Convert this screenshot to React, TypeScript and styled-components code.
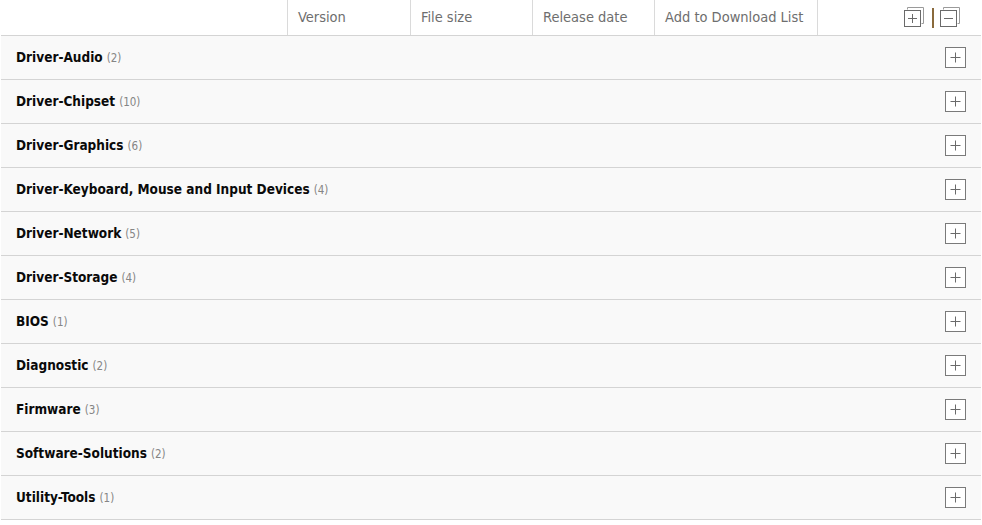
import React from "react";
import styled, { createGlobalStyle } from "styled-components";

const Global = createGlobalStyle`
  html, body { margin: 0; padding: 0; background: #ffffff; }
  body { font-family: "DejaVu Sans Condensed", "DejaVu Sans", "Liberation Sans", sans-serif; }
`;

const Table = styled.div`
  width: 980px;
  margin-left: 1px;
`;

const HeaderRow = styled.div`
  display: grid;
  grid-template-columns: 286px 123px 122px 122px 163px 1fr;
  height: 35px;
  border-bottom: 1px solid #d4d4d4;
  background: #ffffff;
`;

const HeadCell = styled.div<{ $divider?: boolean }>`
  display: flex;
  align-items: center;
  padding-left: 10px;
  padding-bottom: 2px;
  font-size: 14.5px;
  color: #6e6e6e;
  border-left: ${(p) => (p.$divider ? "1px solid #dadada" : "none")};
  white-space: nowrap;
`;

const ToolCell = styled.div`
  display: flex;
  align-items: center;
  justify-content: flex-end;
  padding-right: 21px;
  border-left: 1px solid #dadada;
`;

const Bar = styled.span`
  display: block;
  width: 2px;
  height: 20px;
  background: #8a6a3c;
  margin: 0 6px 0 8px;
`;

const Row = styled.div`
  display: flex;
  align-items: center;
  height: 43px;
  border-bottom: 1px solid #d4d4d4;
  background: #f9f9f9;
  padding-left: 15px;
  padding-right: 15px;
`;

const Label = styled.div`
  display: flex;
  align-items: baseline;
  padding-bottom: 2px;
`;

const Title = styled.span`
  font-weight: bold;
  font-size: 13.5px;
  color: #0a0a0a;
`;

const Count = styled.span`
  font-size: 11.5px;
  color: #858585;
  margin-left: 4px;
`;

const Spacer = styled.div`
  flex: 1;
`;

const PlusBox = styled.div`
  width: 19px;
  height: 19px;
  border: 1px solid #7a7a7a;
  background: #ffffff;
  display: flex;
  align-items: center;
  justify-content: center;
`;

const PlusIcon = () => (
  <svg width="11" height="11" viewBox="0 0 11 11">
    <path d="M5.5 0.5 V10.5 M0.5 5.5 H10.5" stroke="#6a6a6a" strokeWidth="1" fill="none" />
  </svg>
);

const StackIcon = ({ minus }: { minus?: boolean }) => (
  <svg width="20" height="21" viewBox="0 0 20 21">
    <path d="M3.5 2.5 V0.5 H19.5 V16.5 H17.5" stroke="#9a9a9a" strokeWidth="1" fill="none" />
    <rect x="0.5" y="3.5" width="16" height="16" stroke="#6a6a6a" strokeWidth="1" fill="#ffffff" />
    <path d={minus ? "M4 11.5 H13" : "M8.5 7 V16 M4 11.5 H13"} stroke="#6a6a6a" strokeWidth="1" fill="none" />
  </svg>
);

const groups: [string, number][] = [
  ["Driver-Audio", 2],
  ["Driver-Chipset", 10],
  ["Driver-Graphics", 6],
  ["Driver-Keyboard, Mouse and Input Devices", 4],
  ["Driver-Network", 5],
  ["Driver-Storage", 4],
  ["BIOS", 1],
  ["Diagnostic", 2],
  ["Firmware", 3],
  ["Software-Solutions", 2],
  ["Utility-Tools", 1],
];

export default function App() {
  return (
    <>
      <Global />
      <Table>
        <HeaderRow>
          <HeadCell />
          <HeadCell $divider>Version</HeadCell>
          <HeadCell $divider>File size</HeadCell>
          <HeadCell $divider>Release date</HeadCell>
          <HeadCell $divider>Add to Download List</HeadCell>
          <ToolCell>
            <StackIcon />
            <Bar />
            <StackIcon minus />
          </ToolCell>
        </HeaderRow>
        {groups.map(([name, n]) => (
          <Row key={name}>
            <Label>
              <Title>{name}</Title>
              <Count>({n})</Count>
            </Label>
            <Spacer />
            <PlusBox>
              <PlusIcon />
            </PlusBox>
          </Row>
        ))}
      </Table>
    </>
  );
}
